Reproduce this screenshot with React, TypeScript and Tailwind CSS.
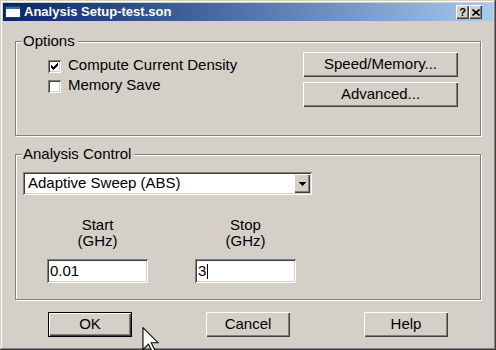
import React from "react";

const raised =
  "shadow-[inset_1px_1px_0_#ffffff,inset_-1px_-1px_0_#404040,inset_-2px_-2px_0_#808080]";
const sunken =
  "shadow-[inset_1px_1px_0_#808080,inset_-1px_-1px_0_#ffffff,inset_2px_2px_0_#404040,inset_-2px_-2px_0_#d4d0c8]";

function Group({
  label,
  className,
  children,
}: {
  label: string;
  className: string;
  children: React.ReactNode;
}) {
  return (
    <div
      className={`relative border border-[#808080] shadow-[inset_1px_1px_0_#ffffff,1px_1px_0_#ffffff] ${className}`}
    >
      <span className="absolute left-[6px] top-[-10px] bg-[#d4d0c8] pl-[1px] pr-[3px] text-[15px] leading-[17px]">
        {label}
      </span>
      {children}
    </div>
  );
}

function CheckBox({ checked }: { checked?: boolean }) {
  return (
    <div className={`relative h-[13px] w-[13px] shrink-0 bg-white ${sunken}`}>
      {checked && (
        <svg
          width="7"
          height="7"
          viewBox="0 0 7 7"
          className="absolute left-[3px] top-[3px]"
          shapeRendering="crispEdges"
        >
          <rect x="6" y="0" width="1" height="1" />
          <rect x="5" y="1" width="2" height="1" />
          <rect x="0" y="2" width="1" height="1" />
          <rect x="4" y="2" width="3" height="1" />
          <rect x="0" y="3" width="2" height="1" />
          <rect x="3" y="3" width="3" height="1" />
          <rect x="0" y="4" width="5" height="1" />
          <rect x="1" y="5" width="3" height="1" />
          <rect x="2" y="6" width="1" height="1" />
        </svg>
      )}
    </div>
  );
}

function Button({ label, width, isDefault }: { label: string; width: string; isDefault?: boolean }) {
  if (isDefault) {
    return (
      <div className={`h-[25px] ${width} border border-black`}>
        <div className={`flex h-full w-full items-center justify-center text-[15px] ${raised}`}>
          {label}
        </div>
      </div>
    );
  }
  return (
    <div className={`flex h-[25px] ${width} items-center justify-center text-[15px] ${raised}`}>
      {label}
    </div>
  );
}

function TextField({ value, caret }: { value: string; caret?: boolean }) {
  return (
    <div className={`flex h-[24px] w-[101px] items-center bg-white pl-[3px] text-[15px] ${sunken}`}>
      <span>{value}</span>
      {caret && <span className="ml-[1px] h-[15px] w-[1px] bg-black" />}
    </div>
  );
}

function CaptionButton({ children }: { children: React.ReactNode }) {
  return (
    <div
      className={`flex h-[14px] w-[13px] items-center justify-center bg-[#d4d0c8] ${raised}`}
    >
      {children}
    </div>
  );
}

export default function App() {
  return (
    <div className="relative h-[350px] w-[496px] overflow-hidden bg-[#d4d0c8] p-[3px] font-['Liberation_Sans',sans-serif] text-black shadow-[inset_-1px_-1px_0_#404040,inset_1px_1px_0_#d4d0c8,inset_-2px_-2px_0_#808080,inset_2px_2px_0_#ffffff]">
      {/* title bar */}
      <div className="flex h-[18px] items-center bg-gradient-to-r from-[#0a246a] to-[#a6caf0] pl-[2px] pr-[11px]">
        <svg width="16" height="12" viewBox="0 0 16 12" shapeRendering="crispEdges">
          <rect x="0" y="0" width="16" height="12" fill="#ffffff" />
          <rect x="0" y="0" width="16" height="3" fill="#3a6ea5" />
          <rect x="0.5" y="0.5" width="15" height="11" fill="none" stroke="#1c3c78" />
        </svg>
        <span className="ml-[3px] text-[13px] font-bold leading-[16px] text-white">
          Analysis Setup-test.son
        </span>
        <div className="ml-auto flex">
          <CaptionButton>
            <span className="text-[11px] font-bold leading-none">?</span>
          </CaptionButton>
          <CaptionButton>
            <svg width="8" height="7" viewBox="0 0 8 7">
              <path d="M0.5 0.5 L7.5 6.5 M7.5 0.5 L0.5 6.5" stroke="#000" strokeWidth="1.6" />
            </svg>
          </CaptionButton>
        </div>
      </div>

      <div className="pl-[12px] pt-[20px]">
        <Group label="Options" className="flex h-[95px] w-[466px] justify-between">
          <div className="flex flex-col pl-[32px] pt-[14px] text-[15px]">
            <div className="flex h-[20px] items-center gap-[7px]">
              <CheckBox checked />
              <span className="-mt-[2px]">Compute Current Density</span>
            </div>
            <div className="flex h-[20px] items-center gap-[7px]">
              <CheckBox />
              <span className="-mt-[2px]">Memory Save</span>
            </div>
          </div>
          <div className="flex flex-col gap-[5px] pr-[22px] pt-[10px]">
            <Button label="Speed/Memory..." width="w-[155px]" />
            <Button label="Advanced..." width="w-[155px]" />
          </div>
        </Group>

        <Group label="Analysis Control" className="mt-[18px] h-[146px] w-[466px]">
          <div
            className={`ml-[7px] mt-[17px] flex h-[23px] w-[289px] items-stretch bg-white p-[2px] ${sunken}`}
          >
            <div className="flex flex-1 items-center pl-[3px] text-[15px]">Adaptive Sweep (ABS)</div>
            <div className={`flex w-[16px] items-center justify-center bg-[#d4d0c8] ${raised}`}>
              <svg width="7" height="4" viewBox="0 0 7 4" shapeRendering="crispEdges">
                <rect x="0" y="0" width="7" height="1" />
                <rect x="1" y="1" width="5" height="1" />
                <rect x="2" y="2" width="3" height="1" />
                <rect x="3" y="3" width="1" height="1" />
              </svg>
            </div>
          </div>

          <div className="ml-[31px] mt-[22px] flex gap-[47px]">
            <div className="flex w-[101px] flex-col items-center">
              <div className="text-center text-[15px] leading-[16px]">
                Start
                <br />
                (GHz)
              </div>
              <div className="mt-[10px]">
                <TextField value="0.01" />
              </div>
            </div>
            <div className="flex w-[101px] flex-col items-center">
              <div className="text-center text-[15px] leading-[16px]">
                Stop
                <br />
                (GHz)
              </div>
              <div className="mt-[10px]">
                <TextField value="3" caret />
              </div>
            </div>
          </div>
        </Group>

        <div className="ml-[33px] mt-[12px] flex gap-[74px]">
          <Button label="OK" width="w-[84px]" isDefault />
          <Button label="Cancel" width="w-[84px]" />
          <Button label="Help" width="w-[84px]" />
        </div>
      </div>

      {/* mouse pointer */}
      <svg
        className="absolute left-[142px] top-[327px]"
        width="17"
        height="26"
        viewBox="0 0 12 19"
      >
        <polygon
          points="0.5,0.5 0.5,16.5 4.5,12.5 7.5,18.5 9.5,17.5 6.5,11.5 11.5,11.5"
          fill="#ffffff"
          stroke="#000000"
          strokeWidth="0.8"
          strokeLinejoin="miter"
        />
      </svg>
    </div>
  );
}
